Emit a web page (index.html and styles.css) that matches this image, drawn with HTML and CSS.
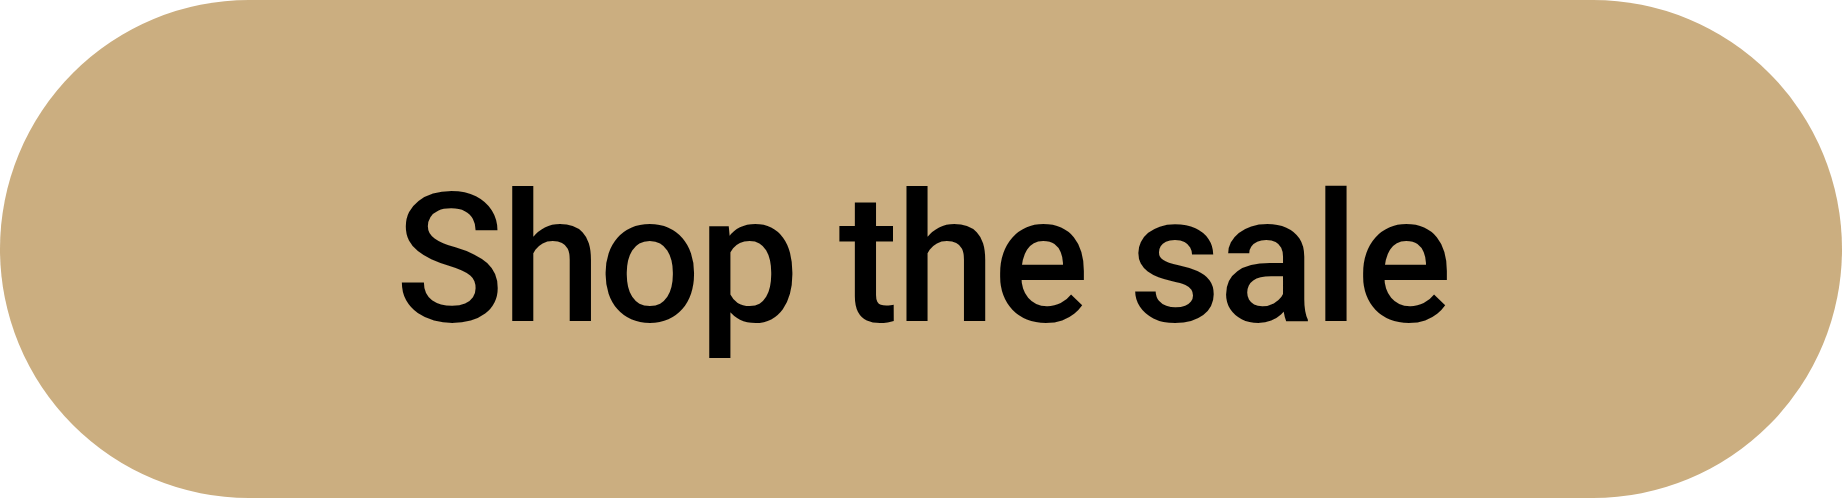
FILE: index.html
```html
<!DOCTYPE html>
<html lang="en">
<head>
    <meta charset="UTF-8">
    <meta name="viewport" content="width=device-width, initial-scale=1.0">
    <title>Shop the sale</title>
    <link rel="stylesheet" href="styles.css">
</head>
<body>
    <a class="sale-button" href="#">Shop the sale</a>
</body>
</html>
```

FILE: styles.css
```css
html, body {
    margin: 0;
    padding: 0;
    background: #fff;
}

.sale-button {
    display: flex;
    align-items: center;
    justify-content: center;
    box-sizing: border-box;
    width: 1842px;
    height: 498px;
    padding-top: 21px;
    padding-left: 3px;
    border-radius: 249px;
    background: #cbae80;
    color: #000;
    font-family: Roboto, "Liberation Sans", sans-serif;
    font-weight: 500;
    font-size: 180px;
    letter-spacing: -2.75px; /* tightens Roboto to the reference width */
    text-decoration: none;
}
```
